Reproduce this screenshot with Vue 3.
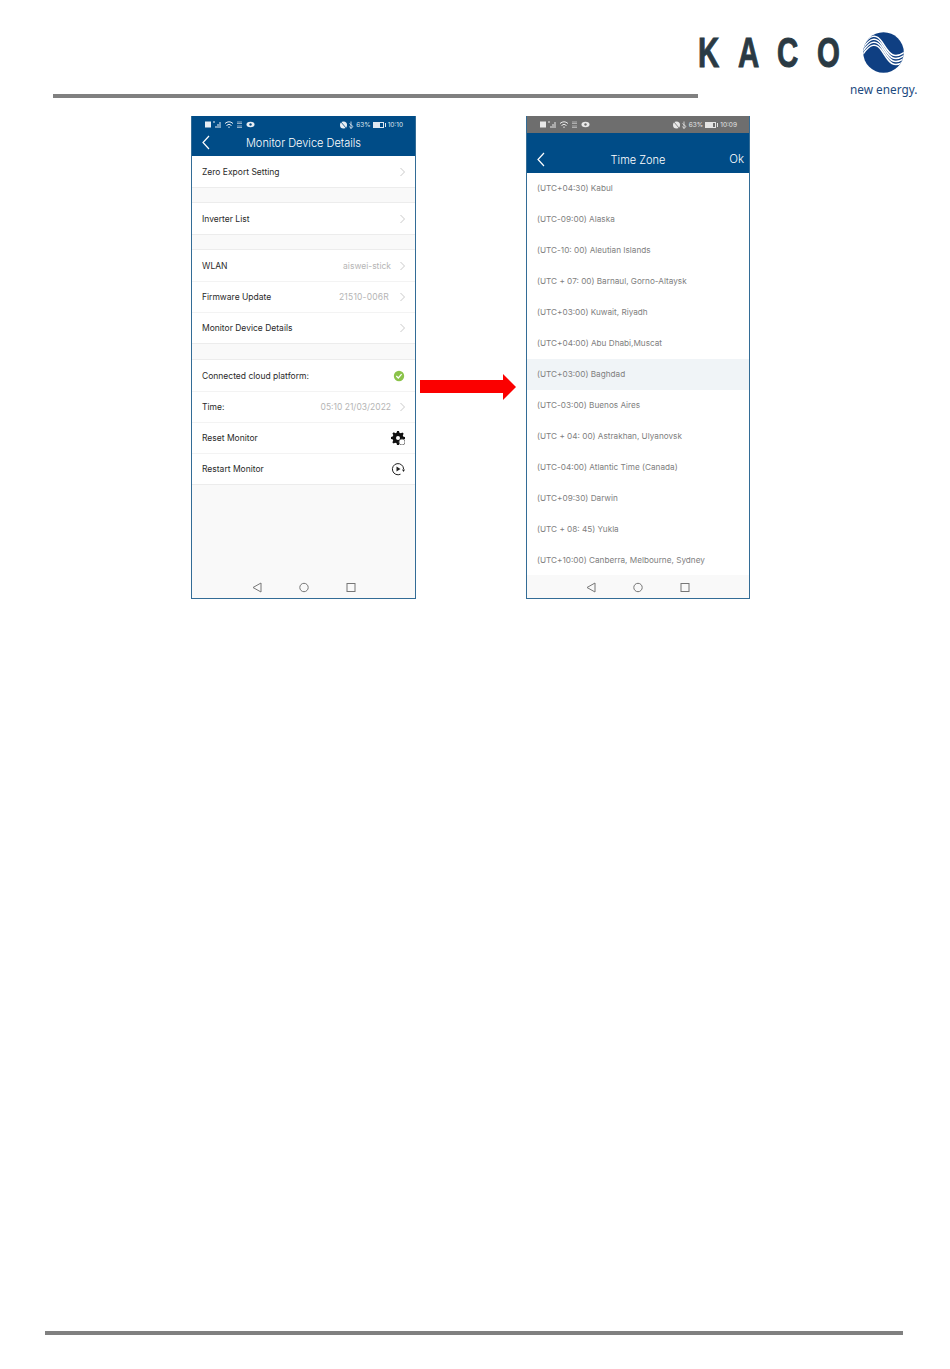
<script setup>
const leftGroups = [
  [{ label: 'Zero Export Setting', arrow: true }],
  [{ label: 'Inverter List', arrow: true }],
  [
    { label: 'WLAN', value: 'aiswei-stick', arrow: true },
    { label: 'Firmware Update', value: '21510-006R', arrow: true, wide: true },
    { label: 'Monitor Device Details', arrow: true },
  ],
  [
    { label: 'Connected cloud platform:', icon: 'check' },
    { label: 'Time:', value: '05:10 21/03/2022', arrow: true },
    { label: 'Reset Monitor', icon: 'gear' },
    { label: 'Restart Monitor', icon: 'play' },
  ],
]
const zones = [
  '(UTC+04:30) Kabul',
  '(UTC-09:00) Alaska',
  '(UTC-10: 00) Aleutian Islands',
  '(UTC + 07: 00) Barnaul, Gorno-Altaysk',
  '(UTC+03:00) Kuwait, Riyadh',
  '(UTC+04:00) Abu Dhabi,Muscat',
  '(UTC+03:00) Baghdad',
  '(UTC-03:00) Buenos Aires',
  '(UTC + 04: 00) Astrakhan, Ulyanovsk',
  '(UTC-04:00) Atlantic Time (Canada)',
  '(UTC+09:30) Darwin',
  '(UTC + 08: 45) Yukla',
  '(UTC+10:00) Canberra, Melbourne, Sydney',
]
</script>

<template>
  <div class="page">
    <header class="top">
      <div class="rule top-rule"></div>
      <div class="brand">
        <div class="brand-row">
          <span class="kaco"><span>K</span><span>A</span><span>C</span><span>O</span></span>
          <svg class="globe" viewBox="0 0 41 41" width="41" height="41">
            <defs><clipPath id="globe-clip"><circle cx="20.500" cy="20.500" r="20.300" /></clipPath></defs>
            <circle cx="20.500" cy="20.500" r="20.300" fill="#0f3f82" />
            <g clip-path="url(#globe-clip)" fill="none" stroke="#fff" stroke-width="1.500">
              <path d="M0 13C7 3 13 1 19 10S29 29 42 20" />
              <path d="M0 16C7 6 13 4 19 13S29 32 42 23" />
              <path d="M0 19C7 9 13 7 19 16S29 35 42 26" />
              <path d="M0 22C7 12 13 10 19 19S29 38 42 29" />
            </g>
          </svg>
        </div>
        <div class="tagline">new energy.</div>
      </div>
    </header>

    <main class="content">
      <section class="phone">
        <div class="status">
          <svg class="st-left" viewBox="0 0 50 9" width="50" height="9">
            <rect x="0" y="1.500" width="6" height="6" fill="#e8eef4" />
            <path d="M8 2h2M11 8V6M13 8V4M15 8V2" stroke="#e8eef4" fill="none" />
            <path d="M20 3.500q4-3.500 8 0M21.500 5.500q2.500-2.500 5 0M23.500 7.500l.5-.8.500.8" stroke="#e8eef4" fill="none" />
            <path d="M32 2h5M32 3.500h5M32 6h5M32 7.500h5" stroke="#c8d6e2" stroke-width=".7" />
            <ellipse cx="45.500" cy="4.500" rx="4" ry="2.800" fill="#e8eef4" />
            <circle cx="45.500" cy="4.500" r="1.200" fill="#004c87" />
          </svg>
          <span class="st-right">
            <svg class="st-icons" viewBox="0 0 14 8" width="14" height="8">
              <circle cx="3.500" cy="4" r="3.500" fill="#e8eef4" />
              <path d="M1 1l5 6" stroke="#004c87" stroke-width=".8" />
              <path d="M11 .5v7l2-2-3.500-3M11 7.500L9.500 5.500" stroke="#e8eef4" fill="none" stroke-width=".8" />
            </svg>
            <span>63%</span>
            <span class="battery"><i></i></span>
            <span class="clock">10:10</span>
          </span>
        </div>
        <div class="nav nav-short">
          <svg class="back" viewBox="0 0 8 15" width="8" height="15"><path d="M7 1L1 7.500 7 14" fill="none" stroke="#fff" stroke-width="1.200" /></svg>
          <span class="title">Monitor Device Details</span>
        </div>
        <div class="settings">
          <div v-for="(group, g) in leftGroups" :key="g" class="group">
            <div v-for="row in group" :key="row.label" class="row">
              <span class="label">{{ row.label }}</span>
              <span v-if="row.value" class="value" :class="{ wide: row.wide }">{{ row.value }}</span>
              <svg v-if="row.arrow" class="chev" viewBox="0 0 5 10" width="5" height="10"><path d="M.5 1L4.500 5 .5 9" fill="none" stroke="#c9c9c9" stroke-width="1" /></svg>
              <svg v-if="row.icon === 'check'" class="ic" viewBox="0 0 12 12" width="12" height="12">
                <circle cx="6" cy="6" r="5.200" fill="#8bc34a" /><path d="M3.300 6l2 2 3.300-3.800" fill="none" stroke="#fff" stroke-width="1.200" />
              </svg>
              <svg v-if="row.icon === 'gear'" class="ic" viewBox="0 0 14 14" width="14" height="14">
                <path d="M6 0h2l.4 1.700 1.500.6 1.500-.9 1.300 1.400-.9 1.500.6 1.500L14 6v2l-1.700.4-.6 1.500.9 1.500-1.400 1.300-1.500-.9-1.500.6L8 14H6l-.4-1.700-1.500-.6-1.500.9-1.300-1.400.9-1.500-.6-1.500L0 8V6l1.700-.4.6-1.500-.9-1.500 1.400-1.300 1.500.9 1.500-.6z" fill="#111" />
                <circle cx="7" cy="7" r="2" fill="#fff" />
                <circle cx="11" cy="11" r="3" fill="#fff" stroke="#666" stroke-width=".8" />
              </svg>
              <svg v-if="row.icon === 'play'" class="ic" viewBox="0 0 14 14" width="14" height="14">
                <path d="M9.500 12.200A5.600 5.600 0 1 1 12.600 7" fill="none" stroke="#222" stroke-width="1" />
                <path d="M5.500 4.500l4 2.500-4 2.500z" fill="#222" />
                <path d="M11 7.500h3L12.500 10z" fill="#222" />
              </svg>
            </div>
          </div>
        </div>
        <div class="softkeys">
          <svg viewBox="0 0 10 11" width="10" height="11"><path d="M9 1L1 5.500 9 10z" fill="none" stroke="#777" /></svg>
          <svg viewBox="0 0 10 11" width="10" height="11"><circle cx="5" cy="5.500" r="4.200" fill="none" stroke="#777" /></svg>
          <svg viewBox="0 0 10 11" width="10" height="11"><rect x="1" y="1.500" width="8" height="8" fill="none" stroke="#777" /></svg>
        </div>
      </section>

      <div class="arrow"><span class="shaft"></span><span class="head"></span></div>

      <section class="phone phone-right">
        <div class="status grey">
          <svg class="st-left" viewBox="0 0 50 9" width="50" height="9">
            <rect x="0" y="1.500" width="6" height="6" fill="#e8e8e8" />
            <path d="M8 2h2M11 8V6M13 8V4M15 8V2" stroke="#e8e8e8" fill="none" />
            <path d="M20 3.500q4-3.500 8 0M21.500 5.500q2.500-2.500 5 0M23.500 7.500l.5-.8.500.8" stroke="#e8e8e8" fill="none" />
            <path d="M32 2h5M32 3.500h5M32 6h5M32 7.500h5" stroke="#ccc" stroke-width=".7" />
            <ellipse cx="45.500" cy="4.500" rx="4" ry="2.800" fill="#e8e8e8" />
            <circle cx="45.500" cy="4.500" r="1.200" fill="#6e6e6e" />
          </svg>
          <span class="st-right">
            <svg class="st-icons" viewBox="0 0 14 8" width="14" height="8">
              <circle cx="3.500" cy="4" r="3.500" fill="#e8e8e8" />
              <path d="M1 1l5 6" stroke="#6e6e6e" stroke-width=".8" />
              <path d="M11 .5v7l2-2-3.500-3M11 7.500L9.500 5.500" stroke="#e8e8e8" fill="none" stroke-width=".8" />
            </svg>
            <span>63%</span>
            <span class="battery"><i></i></span>
            <span class="clock">10:09</span>
          </span>
        </div>
        <div class="nav nav-tall">
          <svg class="back" viewBox="0 0 8 15" width="8" height="15"><path d="M7 1L1 7.500 7 14" fill="none" stroke="#fff" stroke-width="1.200" /></svg>
          <span class="title">Time Zone</span>
          <span class="ok">Ok</span>
        </div>
        <div class="zones">
          <div v-for="(z, i) in zones" :key="z" class="zone" :class="{ hl: i === 6 }">{{ z }}</div>
        </div>
        <div class="softkeys">
          <svg viewBox="0 0 10 11" width="10" height="11"><path d="M9 1L1 5.500 9 10z" fill="none" stroke="#777" /></svg>
          <svg viewBox="0 0 10 11" width="10" height="11"><circle cx="5" cy="5.500" r="4.200" fill="none" stroke="#777" /></svg>
          <svg viewBox="0 0 10 11" width="10" height="11"><rect x="1" y="1.500" width="8" height="8" fill="none" stroke="#777" /></svg>
        </div>
      </section>
    </main>

    <footer class="rule bottom-rule"></footer>
  </div>
</template>

<style>
html, body { margin: 0; background: #fff; }
</style>

<style scoped>
.page {
  width: 950px;
  height: 1369px;
  overflow: hidden;
  background: #fff;
  font-family: "Inter", "Liberation Sans", sans-serif;
  display: flex;
  flex-direction: column;
}
.top {
  height: 116px;
  flex: none;
  display: flex;
}
.rule { background: #808080; }
.top-rule {
  width: 645px;
  height: 4px;
  margin: 94px 0 0 53px;
}
.brand {
  width: 230px;
  padding-top: 32px;
  box-sizing: border-box;
}
.brand-row { display: flex; align-items: center; }
.kaco {
  width: 165px;
  height: 41px;
  display: flex;
  align-items: center;
  color: #2a3a44;
  font: 700 42px/41px "Liberation Sans", sans-serif;
  -webkit-text-stroke: 1px #2a3a44;
}
.kaco span {
  width: 39.700px;
  transform: scaleX(.7);
  transform-origin: left center;
}
.globe { display: block; }
.tagline {
  margin: 8px 0 0 152px;
  font: 400 11.800px/16px "Noto Sans", sans-serif;
  color: #1c4a80;
  white-space: nowrap;
}
.content {
  display: flex;
  margin-left: 191px;
  align-items: flex-start;
}
.phone {
  width: 225px;
  height: 483px;
  flex: none;
  box-sizing: border-box;
  border: 1px solid #336c96;
  border-top: 0;
  display: flex;
  flex-direction: column;
  background: #f9f9f9;
  position: relative;
}
.phone-right { width: 224px; }
.status {
  height: 17px;
  flex: none;
  background: #004c87;
  color: #dfe8f0;
  font-size: 6.500px;
  display: flex;
  align-items: center;
  justify-content: space-between;
  padding: 0 12px 0 13px;
}
.status.grey { background: #6e6e6e; color: #e4e4e4; }
.st-left { display: block; }
.st-right { display: flex; align-items: center; gap: 1px; }
.st-icons { margin-right: 1px; }
.battery {
  width: 11px;
  height: 6px;
  border: 1px solid currentColor;
  box-sizing: border-box;
  margin-left: 1px;
  position: relative;
}
.battery::after {
  content: "";
  position: absolute;
  right: -3px;
  top: 0;
  width: 1px;
  height: 4px;
  background: currentColor;
}
.battery i { display: block; height: 100%; width: 70%; background: currentColor; }
.clock { margin-left: 3px; }
.nav {
  background: #004c87;
  color: #fff;
  position: relative;
  flex: none;
  display: flex;
  align-items: center;
  justify-content: center;
}
.nav-short { height: 23px; padding-bottom: 4px; box-sizing: border-box; }
.nav-tall { height: 40px; padding-top: 13px; box-sizing: border-box; }
.back { position: absolute; left: 10px; }
.nav-short .back { top: 2px; }
.nav-tall .back { top: 19px; }
.title { font-size: 11px; font-weight: 300; }
.ok { position: absolute; right: 5px; top: 19px; font-size: 11.500px; font-weight: 300; }
.settings { flex: 1; }
.group {
  margin-bottom: 14px;
  background: #fff;
  border-bottom: 1px solid #ececec;
  border-top: 1px solid #ececec;
}
.group:first-child { border-top: 0; }
.group:nth-child(3) { margin-bottom: 15px; }
.row {
  height: 31px;
  display: flex;
  align-items: center;
  padding: 0 10px;
  box-sizing: border-box;
  font-size: 8.500px;
  color: #2a2a2a;
}
.row + .row { border-top: 1px solid #f3f3f3; }
.label { flex: 1; white-space: nowrap; }
.value { color: #b5b5b5; margin-right: 9px; white-space: nowrap; }
.value.wide { margin-right: 11px; letter-spacing: .2px; }
.chev { display: block; }
.zones { flex: 1; background: #fff; overflow: hidden; }
.zone {
  height: 31px;
  display: flex;
  align-items: center;
  padding: 0 0 1px 10px;
  box-sizing: border-box;
  font-size: 8.200px;
  color: #808080;
  white-space: nowrap;
}
.zone.hl { background: #f0f4f7; }
.softkeys {
  position: absolute;
  left: 0;
  right: 0;
  bottom: 0;
  height: 23px;
  padding-top: 1px;
  box-sizing: border-box;
  display: flex;
  align-items: center;
  justify-content: center;
  gap: 37px;
  background: #f9f9f9;
}
.arrow {
  width: 96px;
  flex: none;
  margin: 257px 10px 0 4px;
  height: 27px;
  display: flex;
  align-items: center;
}
.shaft { width: 83px; height: 13px; background: #fb0000; }
.head {
  width: 0;
  height: 0;
  border-top: 13.500px solid transparent;
  border-bottom: 13.500px solid transparent;
  border-left: 13px solid #fb0000;
}
.bottom-rule {
  width: 858px;
  height: 4px;
  margin: 732px 0 0 45px;
}
</style>
